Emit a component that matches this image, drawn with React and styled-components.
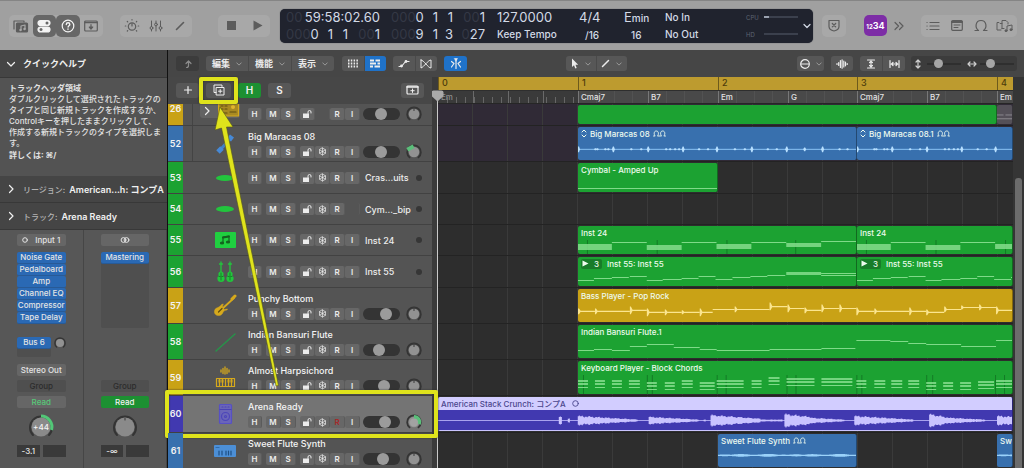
import React from 'react'
import styled, { createGlobalStyle, css } from 'styled-components'

const GREEN = '#1ca232'
const BLUE = '#3870ae'
const GOLD = '#c9a216'
const PURPLE = '#4139b0'
const LILAC = '#d2cdff'
const MARK = '#dfe31c'

const BARS = '140fr 140fr 139fr 140fr 16fr'

const trackList = [
  { no: 26, h: 22, color: GOLD, icon: 'machine', clipped: true, nested: true, noFreeze: true, vol: 48, pan: 0 },
  { no: 52, h: 36, color: BLUE, icon: 'maracas', name: 'Big Maracas 08', nested: true, vol: 48, pan: -1 },
  { no: 53, h: 32, color: GREEN, icon: 'cymbal', short: 'Cras...uits' },
  { no: 54, h: 31, color: GREEN, icon: 'cymbal', short: 'Cym..._bip', noInput: true },
  { no: 55, h: 31, color: GREEN, icon: 'notes', short: 'Inst 24' },
  { no: 56, h: 32, color: GREEN, icon: 'strings', short: 'Inst 55' },
  { no: 57, h: 36, color: GOLD, icon: 'guitar', name: 'Punchy Bottom', vol: 68, pan: 0 },
  { no: 58, h: 36, color: GREEN, icon: 'flute', name: 'Indian Bansuri Flute', vol: 38, pan: 0 },
  { no: 59, h: 36, color: GOLD, icon: 'keys', name: 'Almost Harpsichord', vol: 60, pan: 0 },
  { no: 60, h: 37, color: PURPLE, icon: 'amp', name: 'Arena Ready', selected: true, vol: 62, pan: 1 },
  { no: 61, h: 36, color: BLUE, icon: 'synth', name: 'Sweet Flute Synth', vol: 57, pan: 0 },
]

/* note lists: [x, y, width, height] */
const inst24 = [
  [0, 18, 34, 6], [34, 16, 35, 1], [69, 19, 35, 5], [104, 16, 35, 1],
  [139, 18, 35, 5], [174, 16, 35, 1], [209, 17, 35, 4], [244, 15, 35, 1],
]
const inst55 = [
  [0, 23, 16, 1], [16, 21, 18, 1], [34, 20, 17, 1], [52, 19, 17, 1], [69, 23, 16, 1], [85, 22, 19, 1],
  [104, 21, 17, 1], [121, 19, 17, 1], [138, 22, 17, 1], [155, 20, 18, 1], [173, 19, 17, 1], [190, 18, 18, 1],
  [209, 15, 35, 3], [244, 16, 35, 1], [244, 18, 35, 1],
]
const flute = [
  [0, 25, 16, 1], [16, 24, 18, 1], [34, 25, 18, 1], [52, 21, 17, 1], [69, 19, 27, 1], [96, 22, 26, 1],
  [122, 24, 17, 1], [139, 25, 53, 1], [192, 24, 52, 1], [244, 23, 34, 1], [279, 15, 34, 1], [313, 16, 18, 1],
  [331, 18, 18, 1], [349, 19, 35, 1], [384, 21, 35, 1], [419, 15, 16, 1],
]
const chordBlocks = [
  [0, 19, 10], [17, 19, 10], [34, 19, 10], [51, 19, 11], [69, 21, 10], [87, 21, 10], [104, 19, 11], [122, 21, 15],
  [139, 19, 27], [174, 19, 10], [191, 16, 11], [209, 17, 28], [244, 17, 31], [279, 19, 10], [297, 19, 11],
  [314, 19, 11], [331, 19, 11], [349, 21, 10], [366, 21, 10], [383, 21, 11], [401, 20, 16], [419, 19, 16],
]
const keyboard = chordBlocks.flatMap(([x, y, w]) => [[x, y, w, 2], [x, y + 3, w, 2], [x, y + 7, w, 1]])
/* [x, y, width, hit] */
const bass = [
  [0, 23, 17, 3], [17, 23, 35, 3], [52, 22, 17, 4], [69, 24, 18, 4], [87, 24, 17, 3], [104, 24, 18, 2],
  [122, 24, 13, 4], [135, 21, 22, 0], [157, 21, 35, 3], [192, 18, 18, 4], [210, 20, 17, 4], [227, 22, 17, 3],
  [244, 20, 18, 4], [262, 20, 17, 4], [279, 23, 18, 4], [297, 23, 35, 3], [332, 23, 17, 4], [349, 24, 18, 3],
  [367, 21, 17, 3], [384, 19, 18, 2], [402, 19, 17, 3], [419, 22, 16, 4],
]
const shakes = [[0, 3], [17, 1], [19, 1], [27, 1], [30, 1], [35, 3], [53, 1], [63, 1], [70, 3], [88, 1], [92, 1], [97, 1], [101, 1], [105, 3], [121, 1], [130, 1], [139, 3], [157, 1], [167, 1], [174, 3], [190, 1], [199, 1], [209, 3], [227, 2], [245, 3], [262, 1], [270, 1]]
/* [start, length, amplitude, tail] */
const bursts = [[121, 3, 4, 4], [130, 2, 2, 1], [140, 60, 5, 1], [211, 50, 4, 1], [266, 2, 1, 1], [273, 50, 6, 2], [323, 22, 1, 1], [347, 26, 7, 4], [373, 34, 3, 1], [417, 59, 5, 1], [492, 20, 7, 3], [512, 36, 3, 1], [560, 15, 5, 4]]

const Global = createGlobalStyle`
  * { box-sizing: border-box; }
  body {
    margin: 0;
    background: #2d2d2d;
    color: #ececec;
    font-family: Inter, "Noto Sans CJK JP", sans-serif;
    font-size: 10px;
  }
  button, input {
    font: inherit;
    color: inherit;
    margin: 0;
    padding: 0;
    border: 0;
    background: none;
  }
  h2, p { margin: 0; font-size: inherit; }
  svg { display: block; flex: none; }
`

const Page = styled.div`
  height: 100vh;
  overflow: hidden;
  display: flex;
  flex-direction: column;
`

/* ---------- control bar ---------- */

const ControlBar = styled.header`
  flex: none;
  height: 50px;
  padding: 0 7px 0 9px;
  border-top: 1px solid #858585;
  background: #a0a0a0;
  color: #5c5c5c;
  display: flex;
  align-items: center;
`
const BarGroup = styled.div`
  display: flex;
  height: 22px;
  width: ${p => p.$w}px;
  margin-right: ${p => p.$after || 0}px;
  border-radius: 5px;
  background: #a8a8a8;
`
const BarButton = styled.button`
  flex: 1;
  display: flex;
  align-items: center;
  justify-content: center;
  border-radius: 5px;
  ${p => p.$on && css`
    background: #676767;
    color: #f4f4f4;
  `}
`
const CountIn = styled.button`
  width: 23px;
  height: 21px;
  margin: 0 5px 0 18px;
  border-radius: 5px;
  background: #7d2da6;
  color: #fff;
  font-size: 9px;
  font-weight: 700;
  small { font-size: 6px; }
`
const More = styled.button`
  width: 14px;
  display: flex;
  justify-content: center;
`
const RightTools = styled.div`
  margin-left: auto;
`
const Lcd = styled.div`
  flex: 0 1 533px;
  min-width: 0;
  height: 34px;
  margin-right: 9px;
  padding-left: 6px;
  border-radius: 5px;
  background: #20232e;
  box-shadow: 0 0 1px #33363f;
  color: #d3dae6;
  display: grid;
  grid-template-columns: 105px 106px 82px 45px 41px 81px 52px 1fr;
  align-items: center;
  white-space: nowrap;
`
const LcdCell = styled.div`
  font-size: 10px;
  font-weight: 500;
  line-height: 17px;
`
const LcdBig = styled.div`
  font-size: 13px;
  height: 17px;
  ${p => p.$indent && css`padding-left: ${p.$indent}px;`}
  small { font-size: 10px; font-weight: 500; }
`
const Ghost = styled.span`
  color: #343845;
`
const Digits = styled.div`
  width: 94px;
  display: grid;
  grid-template-columns: 32px 15px 15px 32px;
  text-align: right;
  font-size: 13px;
  height: 17px;
`
const Clock = styled.div`
  width: 94px;
  display: flex;
  justify-content: space-between;
  font-size: 13px;
  height: 17px;
`
const Load = styled.div`
  display: flex;
  align-items: center;
  justify-content: space-between;
  height: 17px;
  color: #5d6372;
  font-size: 6px;
`
const LoadBar = styled.div`
  width: 34px;
  height: 2px;
  background: linear-gradient(90deg, ${p => p.$lit ? '#9aa2b0 0 5px,' : ''} #3b404d ${p => p.$lit ? '5px' : '0'});
`
const LcdMenu = styled.button`
  display: flex;
  justify-content: center;
  padding-left: 3px;
`

/* ---------- inspector ---------- */

const Body = styled.div`
  flex: 1;
  min-height: 0;
  display: flex;
`
const Inspector = styled.aside`
  flex: none;
  width: 168px;
  border-right: 1px solid #111;
  background: #535353;
  display: flex;
  flex-direction: column;
`
const Fold = styled.button`
  flex: none;
  height: ${p => p.$h}px;
  padding-left: 6px;
  border-bottom: 1px solid #383838;
  background: #454545;
  color: #f0f0f0;
  display: flex;
  align-items: center;
  text-align: left;
  font-size: 9px;
  font-weight: 600;
  white-space: nowrap;
  svg { margin-right: 7px; }
`
const FoldLabel = styled.span`
  margin-right: 4px;
  color: #b4b4b4;
  font-size: 8px;
  font-weight: 500;
`
const Help = styled.div`
  flex: none;
  height: 98px;
  padding: 4px 0 0 9px;
  color: #e2e2e2;
  font-size: 8px;
  font-weight: 500;
  line-height: 11px;
  white-space: nowrap;
  h2 { font-weight: 700; line-height: 12px; }
  strong { line-height: 12px; }
`
const Strips = styled.div`
  flex: 1;
  display: grid;
  grid-template-columns: 1fr 1fr;
  background: #575757;
`
const Strip = styled.div`
  padding: 4px 17px 0;
  border-right: 1px solid #464646;
  display: flex;
  flex-direction: column;
  align-items: stretch;
  color: #e4e4e4;
  font-size: 8px;
  font-weight: 500;
  white-space: nowrap;
`
const StripButton = styled.button`
  flex: none;
  height: 12px;
  margin-bottom: ${p => p.$after || 0}px;
  border-radius: 2px;
  background: ${p => p.$bg || '#666'};
  color: ${p => p.$fg || 'inherit'};
  display: flex;
  align-items: center;
  justify-content: center;
  gap: 7px;
`
const Inserts = styled.div`
  flex: none;
  height: 76px;
  margin-bottom: 9px;
  border-radius: 2px;
  background: ${p => p.$tall ? '#4f4f4f' : 'transparent'};
`
const Insert = styled.button`
  display: block;
  width: 100%;
  height: 12px;
  border-bottom: 1px solid #285a96;
  border-radius: 2px;
  background: #2a69b4;
  line-height: 11px;
`
const Sends = styled.div`
  flex: none;
  height: 27px;
  display: flex;
  justify-content: space-between;
`
const Send = styled.div`
  width: 34px;
  height: 20px;
  border-radius: 2px;
  background: #4f4f4f;
`
const PanHolder = styled.div`
  flex: none;
  height: 37px;
  display: flex;
  justify-content: center;
  align-items: center;
`
const Levels = styled.div`
  display: grid;
  grid-template-columns: 1fr 1fr;
  gap: 3px;
  span {
    height: 12px;
    background: #3a3a3a;
    line-height: 12px;
    text-align: center;
  }
`

/* ---------- tracks area ---------- */

const Main = styled.main`
  flex: 1;
  min-width: 0;
  display: flex;
  flex-direction: column;
`
const MenuBar = styled.div`
  flex: none;
  height: 27px;
  padding: 0 7px 0 8px;
  background: #464646;
  display: flex;
  align-items: center;
`
const Tools = styled.div`
  display: flex;
  height: 15px;
  width: ${p => p.$w}px;
  margin-right: ${p => p.$after || 0}px;
  border-radius: 3px;
  background: ${p => p.$dark ? '#3c3c3c' : '#575757'};
  overflow: hidden;
`
const Tool = styled.button`
  flex: 1;
  display: flex;
  align-items: center;
  justify-content: center;
  gap: 6px;
  font-size: 9px;
  font-weight: 700;
  background: ${p => p.$on ? '#1f72c9' : 'transparent'};
  color: ${p => p.$dim ? '#8c8c8c' : '#ececec'};
  & + & { border-left: 1px solid #4a4a4a; }
`
const Spacer = styled.div`
  flex: ${p => p.$n};
`
const ZoomBox = styled.label`
  flex: 1;
  display: flex;
  align-items: center;
  justify-content: space-between;
  padding: 0 3px;
  color: #cfcfcf;
`
const Zoom = styled.input`
  appearance: none;
  width: 34px;
  height: 9px;
  background: linear-gradient(#2f2f2f, #2f2f2f) center / 100% 2px no-repeat;
  &::-webkit-slider-thumb {
    appearance: none;
    width: 9px;
    height: 9px;
    border-radius: 50%;
    background: #a6a6a6;
  }
`
const Columns = styled.div`
  flex: 1;
  min-height: 0;
  display: flex;
`
const Headers = styled.section`
  position: relative;
  z-index: 2;
  flex: none;
  width: 264px;
  background: #545454;
`
const HeaderBar = styled.div`
  position: relative;
  z-index: 2;
  height: 27px;
  padding: 0 8px 1px 8px;
  background: #474747;
  display: flex;
  align-items: center;
  gap: 7px;
`
const HeaderButton = styled.button`
  width: ${p => p.$w || 23}px;
  height: 15px;
  border-radius: 3px;
  background: ${p => p.$on ? '#1d9032' : '#575757'};
  color: #efefef;
  display: flex;
  align-items: center;
  justify-content: center;
  font-size: 10px;
  font-weight: 600;
  &:last-child { margin-left: auto; }
`
const Pointed = styled.div`
  position: relative;
`
/* call-out frames lie over the interface */
const Frame = styled.div`
  position: absolute;
  inset: ${p => p.$inset};
  border: 4px solid ${MARK};
  border-radius: 2px;
  box-shadow: 0 0 2px #2a2a2a, inset 0 0 2px #2a2a2a;
  pointer-events: none;
`
const Arrow = styled.svg`
  position: absolute;
  left: -7px;
  top: -6px;
  pointer-events: none;
`
const TrackRow = styled.div`
  position: relative;
  height: ${p => p.$h}px;
  border-bottom: 1px solid #424242;
  background: ${p => p.$selected ? '#747474' : 'transparent'};
  display: flex;
  align-items: ${p => p.$clipped ? 'flex-end' : 'stretch'};
`
const TrackNo = styled.div`
  flex: none;
  width: 15px;
  height: ${p => p.$h - 1}px;
  line-height: ${p => p.$clipped ? 9 : p.$h - 1}px;
  background: ${p => p.$color};
  color: #f2f2f2;
  text-align: center;
  font-size: 9px;
  font-weight: 600;
`
const TrackIcon = styled.div`
  flex: none;
  width: ${p => p.$nested ? 56 : 65}px;
  margin-left: ${p => p.$nested ? 9 : 0}px;
  height: ${p => p.$clipped ? '100%' : 'auto'};
  padding-right: 8px;
  border-left: ${p => p.$nested ? '1px solid #444' : '0'};
  display: flex;
  align-items: ${p => p.$clipped ? 'flex-start' : 'center'};
  justify-content: flex-end;
`
const Folder = styled.div`
  height: 14px;
  padding-left: 2px;
  border-radius: 0 0 3px 3px;
  background: #636363;
  display: flex;
  align-items: center;
  gap: 6px;
`
const TrackInfo = styled.div`
  flex: 1;
  padding-right: 10px;
  padding-bottom: ${p => p.$clipped ? 5 : 0}px;
  display: flex;
  flex-direction: column;
  justify-content: center;
  gap: 2px;
`
const TrackName = styled.div`
  height: 14px;
  line-height: 13px;
  color: #f4f4f4;
  font-size: 9px;
  font-weight: 500;
  white-space: nowrap;
`
const TrackControls = styled.div`
  height: 12px;
  display: flex;
  align-items: center;
`
const Set = styled.div`
  display: flex;
  width: ${p => p.$n ? p.$n * 15 : 14}px;
  margin-right: ${p => p.$after}px;
`
const Key = styled.button`
  flex: 1;
  height: 12px;
  border-right: 1px solid #5b5b5b;
  border-radius: 2px;
  background: ${p => p.$blank ? 'transparent' : '#676767'};
  color: ${p => p.$armed ? '#a52a2a' : '#ececec'};
  display: flex;
  align-items: center;
  justify-content: center;
  font-size: 8px;
  font-weight: 600;
`
const Volume = styled.input`
  appearance: none;
  width: 37px;
  height: 12px;
  margin-right: 6px;
  border-radius: 6px;
  background: #343434;
  &::-webkit-slider-thumb {
    appearance: none;
    width: 12px;
    height: 12px;
    border-radius: 50%;
    background: #9b9b9b;
  }
`
const ShortName = styled.div`
  flex: 1;
  margin-left: 2px;
  font-size: 9px;
  font-weight: 500;
  white-space: nowrap;
`
const Dot = styled.span`
  width: 6px;
  height: 6px;
  border-radius: 50%;
  background: #363636;
`
const Gutter = styled.div`
  flex: none;
  width: 6px;
  background: #3b3b3b;
`

/* ---------- timeline ---------- */

const Timeline = styled.section`
  position: relative;
  flex: 1;
  min-width: 0;
`
const BarRuler = styled.div`
  height: 14px;
  border-bottom: 1px solid #2e2e2e;
  background: #bd9b2f;
  display: grid;
  grid-template-columns: ${BARS};
`
const BarMark = styled.div`
  padding-left: 3px;
  border-left: 1px solid #6d5a1c;
  color: #4c3b0b;
  font-size: 9px;
  font-weight: 500;
  line-height: 12px;
  overflow: hidden;
`
const ChordRuler = styled.div`
  height: 13px;
  border-bottom: 1px solid #262626;
  background: #494949;
  display: grid;
  grid-template-columns: 140fr 70fr 70fr 70fr 69fr 70fr 70fr 16fr;
`
const Chord = styled.div`
  min-width: 0;
  padding-left: 2px;
  border-left: 1px solid #777;
  overflow: hidden;
  font-size: 8px;
  font-weight: 500;
  line-height: 13px;
  white-space: nowrap;
  color: #e2e2e2;
  background: repeating-linear-gradient(90deg, transparent 0 17px, #525252 17px 18px);
  ${p => p.$before && css`
    border-color: transparent;
    color: #8d8d8d;
    background:
      repeating-linear-gradient(90deg, transparent 0 34px, #6a6a6a 34px 35px),
      repeating-linear-gradient(90deg, transparent 0 8px, #666 8px 9px) bottom / 100% 6px no-repeat,
      #3a3a3a;
  `}
`
const Lane = styled.div`
  height: ${p => p.$h}px;
  padding: 1px 0;
  border-bottom: 1px solid #232323;
  background:
    repeating-linear-gradient(90deg, transparent 0 34px, #3a3a3a 34px 35px),
    ${p => p.$tint ? '#302a36' : '#2d2d2d'};
  display: grid;
  grid-template-columns: ${BARS};
`
const Region = styled.div`
  position: relative;
  grid-column: ${p => p.$from} / ${p => p.$to};
  min-width: 0;
  overflow: hidden;
  border-radius: 2px;
  background: ${p => p.$color};
  border-right: 1px solid rgba(0, 0, 0, 0.35);
  color: #eefbee;
  font-size: 8px;
  font-weight: 500;
  svg.wave {
    position: absolute;
    inset: 0;
    width: 100%;
    height: 100%;
  }
`
const RegionName = styled.div`
  position: relative;
  height: 13px;
  padding-left: 3px;
  display: flex;
  align-items: center;
  gap: 3px;
  white-space: nowrap;
  ${p => p.$header && css`
    background: ${LILAC};
    color: #4a468c;
    gap: 6px;
  `}
`
const TakeBadge = styled.span`
  display: flex;
  align-items: center;
  gap: 5px;
  margin-right: 2px;
  padding: 0 3px 0 1px;
  border-radius: 2px;
  background: #187c29;
  line-height: 10px;
`
const Playhead = styled.div`
  position: absolute;
  left: -1px;
  top: 20px;
  bottom: 0;
  width: 1px;
  background: #c9c9c9;
  svg { margin: -7px 0 0 -6px; }
`
const ScrollTrack = styled.div`
  flex: none;
  width: 11px;
  padding: 101px 2px 0;
  background: #353535;
`
const ScrollThumb = styled.div`
  height: 100%;
  border-radius: 3px 3px 0 0;
  background: #6c6c6c;
`

/* ---------- drawings ---------- */

function Icon({ w = 16, h = w, box, children }) {
  return (
    <svg width={w} height={h} viewBox={box || `0 0 ${w} ${h}`} fill="none" stroke="currentColor" strokeWidth="1.2" strokeLinecap="round" strokeLinejoin="round" aria-hidden="true">
      {children}
    </svg>
  )
}

const Down = ({ s = 6 }) => <Icon w={s} box="0 0 8 8"><path d="M1 2.500 4 5.500 7 2.500" /></Icon>
const Caret = () => <Icon w={6} box="0 0 8 8"><path d="M1 2.500 4 5.500 7 2.500" stroke="#a0a0a0" /></Icon>
const Right = () => <Icon w={10}><path d="M3.500 1.500 7 5 3.500 8.500" /></Icon>

const Loops = () => (
  <Icon w={13} h={7}><path d="M.5 6H2.200C.8 4.800.6 1 3.300 1S5.800 4.800 4.400 6h4.200C7.200 4.800 7 1 9.700 1s2.500 3.800 1.100 5h1.700" strokeWidth=".9" /></Icon>
)

const Lock = () => (
  <Icon w={10} h={10}><rect x="1" y="4.500" width="6" height="4.500" fill="currentColor" stroke="none" /><path d="M6 4.500V3a1.500 1.500 0 0 1 3 0v1" strokeWidth="1" /></Icon>
)

const Freeze = () => (
  <Icon w={9}>
    <g strokeWidth=".7"><path d="M4.500 1v7M1.500 2.800l6 3.400M7.500 2.800l-6 3.400" /><path d="M4.500 1 7.500 2.800V6.200L4.500 8 1.500 6.200V2.800z" /></g>
  </Icon>
)

function PanKnob({ pan, size = 16 }) {
  return (
    <Icon w={size} box="0 0 18 18">
      <path d="M4 15A7.700 7.700 0 1 1 14 15" stroke="#343434" strokeWidth="2" />
      <circle cx="9" cy="9" r="6" fill="#929292" stroke="none" />
      {pan === 0 && <path d="M9 1.500V5" stroke="#3c3c3c" />}
      {pan > 0 && <path d="M9 9V1A8 8 0 0 1 16.500 12z" fill="#5bbf7a" stroke="none" />}
      {pan > 0 && <circle cx="9" cy="9.500" r="4.500" fill="#a2a2a2" stroke="none" />}
      {pan < 0 && <path d="M1.500 6.500 8.500 2.500" stroke="#5bbf7a" strokeWidth="4.500" strokeLinecap="butt" />}
    </Icon>
  )
}

const gold = '#d6a91c'
const lime = '#22c53d'

const trackIcons = {
  machine: (
    <Icon w={22} h={14}>
      <rect x=".5" y="-6" width="20" height="18" fill="#a98a22" stroke={gold} />
      <path d="M3 2h2M3 5h2M7 2h2M7 5h2M12 8h6M3 9h6" stroke="#5e4c10" /><circle cx="15" cy="3" r="2" fill="#e2b62c" stroke="none" />
    </Icon>
  ),
  maracas: (
    <Icon w={30} h={24}><path d="m11 17 9-10" stroke="#4180c8" strokeWidth="3" /><path d="m8 20 4-4M19 8l3-4" stroke="#4689d6" strokeWidth="5" strokeLinecap="butt" /></Icon>
  ),
  cymbal: <Icon w={30} h={8}><ellipse cx="15" cy="4" rx="9" ry="3" fill={lime} stroke="none" /></Icon>,
  notes: (
    <Icon w={30} h={18}>
      <rect x="5" y="1" width="21" height="16" rx="1" fill="#20cf40" stroke="none" />
      <g stroke="#14611f"><path d="M13 12V6l6-1v6" /><path d="M13 6.500 19 5.500" strokeWidth="2" /><ellipse cx="12" cy="12" rx="1.500" ry="1" fill="#14611f" /><ellipse cx="18" cy="11" rx="1.500" ry="1" fill="#14611f" /></g>
    </Icon>
  ),
  strings: (
    <Icon w={30} h={22}>
      {[11, 20].map(x => (
        <g key={x} stroke={lime}>
          <path d={`M${x} 1v12M${x - 1.5} 3h3`} strokeWidth="1.300" />
          <circle cx={x} cy="13" r="2.600" fill={lime} stroke="none" />
          <circle cx={x} cy="17.500" r="3.600" fill={lime} stroke="none" />
          <path d={`M${x} 12v7M${x - 2} 15.500h1M${x + 1} 15.500h1`} stroke="#14611f" strokeWidth=".7" />
        </g>
      ))}
    </Icon>
  ),
  guitar: (
    <Icon w={30} h={24}>
      <path d="m12 15 12-11" stroke={gold} strokeWidth="1.800" /><path d="m22 5 3-3" stroke={gold} strokeWidth="3" />
      <path d="M13 10c-2 0-2 2-4 3s-4 1-4.500 4 2 5 5 4.500 3-3 4.500-4.500 3 0 3.500-2l-3 .5-2-2z" fill={gold} stroke={gold} strokeWidth=".5" /><path d="m8.500 18 3.500-3.500" stroke="#5e4c10" />
    </Icon>
  ),
  flute: <Icon w={30} h={24}><path d="M6 21 25 4" stroke="#28924a" strokeWidth="1.500" /></Icon>,
  keys: (
    <Icon w={30} h={24}>
      <path d="M11 6V4M13 7.500v-5M15 8V1M17 7.500v-5M19 6V4" stroke={gold} strokeWidth="1.300" />
      <rect x="6.500" y="12.500" width="18" height="8" stroke={gold} />
      <path d="M9.500 13v7M12.500 13v7M15.500 13v7M18.500 13v7M21.500 13v7" stroke={gold} /><path d="M9.500 14v2M12.500 14v2M18.500 14v2M21.500 14v2" stroke={gold} strokeWidth="2" />
    </Icon>
  ),
  amp: (
    <Icon w={30} h={24}>
      <rect x="9.500" y="2.500" width="12" height="19" rx="1" fill="#6a65b8" stroke="#5750c4" /><path d="M10 7.500h11M12 5h1M15 5h1M18 5h1" stroke="#4a42b4" />
      <circle cx="15.500" cy="14.500" r="4" stroke="#4d46ba" /><circle cx="15.500" cy="14.500" r="1" stroke="#4d46ba" />
    </Icon>
  ),
  synth: (
    <Icon w={30} h={16}>
      <rect x="4" y="2" width="22" height="12" rx="1" fill="#4c8fd6" stroke="none" /><path d="M9 8v4M12 8v4M16 8v4M18.500 8v4M21 8v4" stroke="#1f5085" /><path d="M6 4.500h3" stroke="#2f6bab" />
    </Icon>
  ),
}

function Notes({ w, h, notes, ticks = [] }) {
  return (
    <svg className="wave" viewBox={`0 0 ${w} ${h}`} preserveAspectRatio="none" aria-hidden="true">
      {ticks.map(x => <path key={x} d={`M${x}.5 14v${h}`} stroke="#147a26" />)}
      {notes.map(([x, y, nw, nh], i) => (
        <rect key={i} x={x} y={y} width={nw} height={nh} fill="#85dd8d" opacity={nh > 1 ? 0.85 : 0.95} />
      ))}
    </svg>
  )
}

function BassWave() {
  return (
    <svg className="wave" viewBox="0 0 435 34" preserveAspectRatio="none" fill="#fbe58f" aria-hidden="true">
      {bass.map(([x, y, w, hit], i) => (
        <path key={i} d={`M${x} ${y - 0.5}h${w}v1.200h-${w}zM${x} ${y - hit}l1 0 2 ${hit}-2 ${hit}-1 0z`} />
      ))}
    </svg>
  )
}

function ShakerWave({ w }) {
  return (
    <svg className="wave" viewBox={`0 0 ${w} 34`} preserveAspectRatio="none" fill="#b8e0ff" aria-hidden="true">
      <rect y="22.500" width={w} height="1" fill="#8cc4f5" />
      {shakes.map(([x, a]) => <path key={x} d={`M${x - 1} 23l1-${a} 1 0 1 ${a}-1 ${a}-1 0z`} />)}
    </svg>
  )
}

function SynthWave({ w }) {
  const blips = []
  for (let x = 0; x < w; x += 2) {
    const a = 0.6 + 0.9 * Math.abs(Math.sin(x * 0.09) * Math.cos(x * 1.7))
    blips.push(`M${x} ${22 - a}h2v${a * 2}h-2z`)
  }
  return (
    <svg className="wave" viewBox={`0 0 ${w} 34`} preserveAspectRatio="none" aria-hidden="true">
      <path d={blips.join('')} fill="#9ad2fa" />
    </svg>
  )
}

function GuitarWave() {
  const lines = []
  bursts.forEach(([start, len, amp, tail]) => {
    for (let i = 0; i < len; i++) {
      const k = len > 4 ? i / len : 0
      const a = (amp + (tail - amp) * k) * (0.85 + 0.1 * Math.sin(i * 1.9) + 0.1 * Math.sin(i * 0.7))
      lines.push(`M${start + i} ${23.5 - a}h1.100v${a * 2}h-1.100z`)
    }
  })
  return (
    <svg className="wave" viewBox="0 0 575 34" preserveAspectRatio="none" fill="#c9c3ff" aria-hidden="true">
      <rect y="23" width="575" height="1" fill="#a8a2ee" />
      <path d={lines.join('')} />
      <rect y="33" width="575" height="1" />
    </svg>
  )
}

/* ---------- parts ---------- */

function TopBar() {
  return (
    <ControlBar>
      <BarGroup $w={94} $after={17}>
        <BarButton aria-label="Library">
          <Icon w={16} h={14}><path d="M1 10V2h10v1" /><rect x="3.500" y="4" width="11" height="9" rx="1" fill="currentColor" /><path d="M8 11V7l4-1v4" stroke="#a8a8a8" /><circle cx="7.500" cy="11" r=".6" stroke="#a8a8a8" /><circle cx="11.500" cy="10" r=".6" stroke="#a8a8a8" /></Icon>
        </BarButton>
        <BarButton $on aria-label="Inspector">
          <Icon w={14} h={14}><rect x="1" y="1.500" width="12" height="5" rx="2.500" fill="currentColor" /><rect x="1" y="8" width="12" height="5" rx="2.500" fill="currentColor" /><circle cx="10" cy="4" r="1.500" fill="#676767" stroke="none" /><circle cx="4" cy="10.500" r="1.500" fill="#676767" stroke="none" /></Icon>
        </BarButton>
        <BarButton $on aria-label="Quick Help">
          <Icon w={14}><circle cx="7" cy="7" r="5.800" /><path d="M5.300 5.500c0-2.300 3.500-2.300 3.500 0 0 1.200-1.700 1.300-1.700 2.500M7 10v.2" strokeWidth="1.400" /></Icon>
        </BarButton>
        <BarButton aria-label="Toolbar">
          <Icon w={14} h={12}><rect x=".7" y="1" width="12.600" height="10" rx="1" /><path d="M1 2.500h12" strokeWidth="1.500" /><path d="M7 4.500V8M5.300 7 7 9l1.700-2z" fill="currentColor" /></Icon>
        </BarButton>
      </BarGroup>
      <BarGroup $w={72} $after={26}>
        <BarButton aria-label="Smart Controls">
          <Icon w={16}><circle cx="8" cy="8.500" r="3.700" /><path d="M8 8V5.500M8 1.500v.5M3.300 3.500l.4.4M12.700 3.500l-.4.400M1.300 8h.5M14.200 8h.5M3.300 13l.4-.4M12.700 13l-.4-.4" /></Icon>
        </BarButton>
        <BarButton aria-label="Mixer">
          <Icon w={14}><g strokeWidth="1"><path d="M2.500 2v5.500M2.500 10.500V12M7 2v2M7 7v5M11.500 2v5.500M11.500 10.500V12" /><circle cx="2.500" cy="9" r="1.400" /><circle cx="7" cy="5.500" r="1.400" /><circle cx="11.500" cy="9" r="1.400" /></g></Icon>
        </BarButton>
        <BarButton aria-label="Editors">
          <Icon w={12}><path d="m2.500 9.500 7-7" strokeWidth="1.600" /></Icon>
        </BarButton>
      </BarGroup>
      <BarGroup $w={52} $after={10}>
        <BarButton aria-label="Stop"><Icon w={11}><rect x="1" y="1" width="9" height="9" fill="currentColor" stroke="none" /></Icon></BarButton>
        <BarButton aria-label="Play"><Icon w={11}><path d="M1.500.5v10l9-5z" fill="currentColor" stroke="none" /></Icon></BarButton>
      </BarGroup>
      <Lcd>
        <div>
          <Clock><Ghost>00</Ghost><span>59:58:02.60</span></Clock>
          <Digits><span><Ghost>000</Ghost>0</span><span>1</span><span>1</span><span><Ghost>00</Ghost>1</span></Digits>
        </div>
        <div>
          <Digits><span><Ghost>000</Ghost>0</span><span>1</span><span>1</span><span><Ghost>00</Ghost>1</span></Digits>
          <Digits><span><Ghost>000</Ghost>9</span><span>1</span><span>3</span><span><Ghost>0</Ghost>27</span></Digits>
        </div>
        <div><LcdBig>127.0000</LcdBig><LcdCell>Keep Tempo</LcdCell></div>
        <div><LcdBig>4/4</LcdBig><LcdBig $indent={6}><small>/16</small></LcdBig></div>
        <div><LcdBig>E<small>min</small></LcdBig><LcdBig $indent={7}><small>16</small></LcdBig></div>
        <div><LcdCell>No In</LcdCell><LcdCell>No Out</LcdCell></div>
        <div><Load>CPU<LoadBar $lit /></Load><Load>HD<LoadBar /></Load></div>
        <LcdMenu aria-label="Display mode"><Down s={8} /></LcdMenu>
      </Lcd>
      <BarGroup $w={24}>
        <BarButton aria-label="Replace">
          <Icon w={12} h={13}><path d="M1 1.500h10v6c0 2.500-2.500 4-5 4.500-2.500-.5-5-2-5-4.500z" /><path d="m4.300 4.500 3.400 3.400M7.700 4.500 4.300 7.900" /></Icon>
        </BarButton>
      </BarGroup>
      <CountIn><small>12</small>34</CountIn>
      <More aria-label="More"><Icon w={10}><path d="m1 1.500 3.500 3.500L1 8.500M5.500 1.500 9 5 5.500 8.500" /></Icon></More>
      <RightTools>
        <BarGroup $w={96}>
          <BarButton aria-label="List Editors"><Icon w={14} h={10}><path d="M4 1.500h9M4 5h9M4 8.500h9M1 1.500h.1M1 5h.1M1 8.500h.1" /></Icon></BarButton>
          <BarButton aria-label="Note Pads"><Icon w={12} h={11}><rect x=".7" y=".7" width="10.600" height="9.600" rx="1" /><path d="M1 2h10" strokeWidth="2" /><path d="M3 5h6M3 7.500h4" strokeWidth="1" /></Icon></BarButton>
          <BarButton aria-label="Loop Browser"><Icon w={14} h={13}><path d="M1 11.500h3.500C.5 8.500 1.500 1.500 7 1.500s6.500 7 2.500 10H13" /></Icon></BarButton>
          <BarButton aria-label="Browsers"><Icon w={18} h={14}><g strokeWidth="1"><path d="M5 11H1V3.500h2l1 1h2" /><path d="M6 9.500V1.500h4l2 2V5M8 9.500H6" /><path d="M11 11.500V7l5-1v4.500" /><circle cx="10" cy="11.700" r="1" fill="currentColor" /><circle cx="15" cy="10.700" r="1" fill="currentColor" /></g></Icon></BarButton>
        </BarGroup>
      </RightTools>
    </ControlBar>
  )
}

const plugins = ['Noise Gate', 'Pedalboard', 'Amp', 'Channel EQ', 'Compressor', 'Tape Delay']

function InspectorPane() {
  return (
    <Inspector>
      <Fold $h={28}><Icon w={10}><path d="M1.500 3.500 5 7l3.500-3.500" /></Icon>クイックヘルプ</Fold>
      <Help>
        <h2>トラックヘッダ領域</h2>
        <p>
          ダブルクリックして選択されたトラックの<br />
          タイプと同じ新規トラックを作成するか、<br />
          Controlキーを押したままクリックして、<br />
          作成する新規トラックのタイプを選択しま<br />
          す。
        </p>
        <strong>詳しくは: ⌘/</strong>
      </Help>
      <Fold $h={27}><Right /><FoldLabel>リージョン:</FoldLabel>American...h: コンプA</Fold>
      <Fold $h={27}><Right /><FoldLabel>トラック:</FoldLabel>Arena Ready</Fold>
      <Strips>
        <Strip>
          <StripButton $after={6}><Icon w={6}><circle cx="3" cy="3" r="2.300" strokeWidth="1" /></Icon>Input 1</StripButton>
          <Inserts>{plugins.map(name => <Insert key={name}>{name}</Insert>)}</Inserts>
          <Sends>
            <Send><Insert>Bus 6</Insert></Send>
            <PanKnob size={12} />
          </Sends>
          <StripButton $after={4}>Stereo Out</StripButton>
          <StripButton $bg="#4f4f4f" $fg="#2c2c2c" $after={4}>Group</StripButton>
          <StripButton $fg="#58c878">Read</StripButton>
          <PanHolder>
            <Icon w={28} box="0 0 28 28">
              <path d="M6 22A11 11 0 1 1 22 22" stroke="#343434" strokeWidth="2" /><circle cx="14" cy="14" r="9.500" fill="#8a8a8a" stroke="none" />
              <path d="M14 3A11 11 0 0 1 24.500 17" stroke="#52c777" strokeWidth="3" strokeLinecap="butt" />
              <text x="14" y="17" textAnchor="middle" fontSize="8" fill="#f4f4f4" stroke="none">+44</text>
            </Icon>
          </PanHolder>
          <Levels><span>-3.1</span><span /></Levels>
        </Strip>
        <Strip>
          <StripButton $after={6} aria-label="Stereo format"><Icon w={10} h={6}><circle cx="3.500" cy="3" r="2.400" strokeWidth="1" /><circle cx="6.500" cy="3" r="2.400" strokeWidth="1" /></Icon></StripButton>
          <Inserts $tall><Insert>Mastering</Insert></Inserts>
          <Sends />
          <StripButton $bg="transparent" $after={4} aria-hidden="true" tabIndex={-1} />
          <StripButton $bg="#4f4f4f" $fg="#2c2c2c" $after={4}>Group</StripButton>
          <StripButton $bg="#1d9032" $fg="#f2f2f2">Read</StripButton>
          <PanHolder>
            <Icon w={28} box="0 0 28 28">
              <path d="M6 22A11 11 0 1 1 22 22" stroke="#343434" strokeWidth="2" /><circle cx="14" cy="14" r="9.500" fill="#8a8a8a" stroke="none" />
              <path d="M14 5v2" stroke="#444" />
            </Icon>
          </PanHolder>
          <Levels><span>-∞</span><span /></Levels>
        </Strip>
      </Strips>
    </Inspector>
  )
}

function AreaMenu() {
  return (
    <MenuBar>
      <Tools $w={23} $after={7} $dark><Tool $dim aria-label="Up"><Icon w={10}><path d="M3 4.500 5.500 2 8 4.500M5.500 2v4.500q0 2-2 2" /></Icon></Tool></Tools>
      <Tools $w={128} $after={8}>
        <Tool>編集<Caret /></Tool>
        <Tool>機能<Caret /></Tool>
        <Tool>表示<Caret /></Tool>
      </Tools>
      <Tools $w={44} $after={7}>
        <Tool aria-label="Grid"><Icon w={12} h={9}><path d="M1 1.500h10M1 4.500h10M1 7.500h10" strokeWidth="1.800" strokeDasharray="1.500 1.300" strokeLinecap="butt" /></Icon></Tool>
        <Tool $on aria-label="Tracks"><Icon w={12} h={9}><path d="M1 1.500h4M6.500 1.500H11M1 4.500h6M8.500 4.500H11M1 7.500h3M5.500 7.500H11" strokeWidth="2" strokeLinecap="butt" /></Icon></Tool>
      </Tools>
      <Tools $w={44} $after={7}>
        <Tool aria-label="Automation"><Icon w={12} h={9}><path d="M1 7.500h2.500l4-5H11" /><circle cx="3.500" cy="7" r=".8" fill="currentColor" /><circle cx="8" cy="2.500" r=".8" fill="currentColor" /></Icon></Tool>
        <Tool aria-label="Flex"><Icon w={12} h={10}><path d="M1 1v8C4 8 8 1 11 1v8C8 9 4 1 1 1z" strokeWidth="1" /></Icon></Tool>
      </Tools>
      <Tools $w={23}><Tool $on aria-label="Catch"><Icon w={12} h={11}><path d="M6 1v9.500M1.500 3.500 4 5.500 1.500 9M10.500 3.500 8 5.500 10.500 9" /><path d="M4.500.5h3L6 3z" fill="currentColor" strokeWidth=".5" /></Icon></Tool></Tools>
      <Spacer $n={99} />
      <Tools $w={61}>
        <Tool aria-label="Pointer tool"><Icon w={8} h={11}><path d="M1 .5v8.500l2-1.800L4.300 10.500l1.400-.6L4.500 6.800H7.200z" fill="currentColor" stroke="none" /></Icon><Caret /></Tool>
        <Tool aria-label="Pencil tool"><Icon w={9}><path d="M1.500 7.500 7.500 1.500" strokeWidth="1.500" /></Icon><Caret /></Tool>
      </Tools>
      <Spacer $n={171} />
      <Tools $w={27} $after={7}><Tool aria-label="Snap"><Icon w={10}><circle cx="5" cy="5" r="4.300" /><path d="M1 5h8" /></Icon><Caret /></Tool></Tools>
      <Tools $w={22} $after={7}><Tool aria-label="Waveform zoom"><Icon w={12} h={10}><path d="M1 4.500v1M2.700 3.500v3M4.400 1.500v7M6.100.8v8.400M7.800 2v6M9.500 3.200v3.600M11.200 4.500v1" /></Icon></Tool></Tools>
      <Tools $w={45} $after={6}>
        <Tool aria-label="Vertical auto zoom"><Icon w={10}><path d="M1.500 1h7M1.500 9h7M5 2v6M3.500 3.700 5 2.200l1.500 1.500M3.500 6.300 5 7.800l1.500-1.500" /></Icon></Tool>
        <Tool aria-label="Horizontal auto zoom"><Icon w={11} h={10}><path d="M1 1.500v7M10 1.500v7M2.200 5h6.600M4 3.500 2.500 5 4 6.500M7 3.500 8.500 5 7 6.500" /></Icon></Tool>
      </Tools>
      <Tools $w={106} $dark>
        <ZoomBox><Icon w={8} h={10}><path d="M4 1v8M2 3l2-2 2 2M2 7l2 2 2-2" /></Icon><Zoom type="range" defaultValue="28" aria-label="Vertical zoom" /></ZoomBox>
        <ZoomBox><Icon w={10} h={8}><path d="M1 4h8M3 2 1 4l2 2M7 2l2 2-2 2" /></Icon><Zoom type="range" defaultValue="22" aria-label="Horizontal zoom" /></ZoomBox>
      </Tools>
    </MenuBar>
  )
}

function TrackHeader({ t }) {
  return (
    <TrackRow $h={t.h} $selected={t.selected} $clipped={t.clipped}>
      <TrackNo $h={t.h} $color={t.color} $clipped={t.clipped}>{t.no}</TrackNo>
      <TrackIcon $nested={t.nested} $clipped={t.clipped}>
        {t.clipped ? <Folder><Right />{trackIcons[t.icon]}</Folder> : trackIcons[t.icon]}
      </TrackIcon>
      <TrackInfo $clipped={t.clipped}>
        {t.name && <TrackName>{t.name}</TrackName>}
        <TrackControls>
          <Set $after={4}><Key>H</Key></Set>
          <Set $n={2} $after={4}><Key>M</Key><Key>S</Key></Set>
          <Set $n={4} $after={3}>
            <Key aria-label="Protect"><Lock /></Key>
            {t.noFreeze ? <Key $blank disabled aria-hidden="true" /> : <Key aria-label="Freeze"><Freeze /></Key>}
            <Key $armed={t.selected}>R</Key>
            {t.noInput ? <Key $blank disabled aria-hidden="true" /> : <Key>I</Key>}
          </Set>
          {t.short
            ? <><ShortName>{t.short}</ShortName><Dot /></>
            : <><Volume type="range" defaultValue={t.vol} aria-label={`Volume ${t.no}`} /><PanKnob pan={t.pan} /></>}
        </TrackControls>
      </TrackInfo>
      {t.selected && <Frame $inset="-6px -6px -6px -3px" />}
    </TrackRow>
  )
}

const LoopSign = () => <Icon w={6} h={9}><path d="M1 3 3 1l2 2M1 6l2 2 2-2" strokeWidth="1" /></Icon>
const PlaySign = () => <Icon w={7}><path d="M.5.5v6l6-3z" fill="currentColor" stroke="none" /></Icon>

function Arrange() {
  return (
    <Timeline>
      <BarRuler>{[0, 1, 2, 3, 4].map(n => <BarMark key={n}>{n}</BarMark>)}</BarRuler>
      <ChordRuler>
        <Chord $before>Em</Chord>
        {['Cmaj7', 'B7', 'Em', 'G', 'Cmaj7', 'B7', 'Em'].map((c, i) => <Chord key={i}>{c}</Chord>)}
      </ChordRuler>
      <Lane $h={22} $tint>
        <Region $from={2} $to={5} $color={GREEN} />
        <Region $from={5} $to={6} $color="#545058">
          <svg className="wave" viewBox="0 0 16 20" preserveAspectRatio="none" stroke="#8d8a90"><path d="M0 10.500h7M9 10.500h7M0 14.500h16" /></svg>
        </Region>
      </Lane>
      <Lane $h={36} $tint>
        <Region $from={2} $to={4} $color={BLUE}><ShakerWave w={279} /><RegionName><LoopSign />Big Maracas 08 <Loops /></RegionName></Region>
        <Region $from={4} $to={6} $color={BLUE}><ShakerWave w={156} /><RegionName><LoopSign />Big Maracas 08.1 <Loops /></RegionName></Region>
      </Lane>
      <Lane $h={32}>
        <Region $from={2} $to={3} $color={GREEN}><Notes w={140} h={29} notes={[[0, 25, 140, 1]]} /><RegionName>Cymbal - Amped Up</RegionName></Region>
      </Lane>
      <Lane $h={31} />
      <Lane $h={31}>
        <Region $from={2} $to={4} $color={GREEN}><Notes w={279} h={28} notes={inst24} ticks={[9, 79, 149, 218]} /><RegionName>Inst 24</RegionName></Region>
        <Region $from={4} $to={6} $color={GREEN}><Notes w={156} h={28} notes={inst24} ticks={[9, 79, 149]} /><RegionName>Inst 24</RegionName></Region>
      </Lane>
      <Lane $h={32}>
        <Region $from={2} $to={4} $color={GREEN}><Notes w={279} h={29} notes={inst55} /><RegionName><TakeBadge><PlaySign />3</TakeBadge>Inst 55: Inst 55</RegionName></Region>
        <Region $from={4} $to={6} $color={GREEN}><Notes w={156} h={29} notes={inst55} /><RegionName><TakeBadge><PlaySign />3</TakeBadge>Inst 55: Inst 55</RegionName></Region>
      </Lane>
      <Lane $h={36}>
        <Region $from={2} $to={6} $color={GOLD}><BassWave /><RegionName>Bass Player - Pop Rock</RegionName></Region>
      </Lane>
      <Lane $h={36}>
        <Region $from={2} $to={6} $color={GREEN}><Notes w={435} h={33} notes={flute} /><RegionName>Indian Bansuri Flute.1</RegionName></Region>
      </Lane>
      <Lane $h={36}>
        <Region $from={2} $to={6} $color={GREEN}><Notes w={435} h={33} notes={keyboard} ticks={[5, 69, 74, 139, 148, 209, 218, 279, 284, 349, 355, 418, 427]} /><RegionName>Keyboard Player - Block Chords</RegionName></Region>
      </Lane>
      <Lane $h={37}>
        <Region $from={1} $to={6} $color={PURPLE}><GuitarWave /><RegionName $header>American Stack Crunch: コンプA<Icon w={7}><circle cx="3.500" cy="3.500" r="2.800" strokeWidth=".9" /></Icon></RegionName></Region>
      </Lane>
      <Lane $h={36}>
        <Region $from={3} $to={4} $color={BLUE}><SynthWave w={139} /><RegionName>Sweet Flute Synth <Loops /></RegionName></Region>
        <Region $from={5} $to={6} $color={BLUE}><SynthWave w={16} /><RegionName>Sweet Flute Synth</RegionName></Region>
      </Lane>
      <Playhead>
        <Icon w={13} h={12}><path d="M.5 2.500Q.5.500 2.500.5h8q2 0 2 2V6l-6 5.500L.5 6z" fill="#a9a9a9" stroke="none" /></Icon>
      </Playhead>
    </Timeline>
  )
}

function App() {
  return (
    <Page>
      <Global />
      <TopBar />
      <Body>
        <InspectorPane />
        <Main>
          <AreaMenu />
          <Columns>
            <Headers>
              <HeaderBar>
                <HeaderButton aria-label="Add track"><Icon w={10}><path d="M5 1.500v7M1.500 5h7" /></Icon></HeaderButton>
                <Pointed>
                  <HeaderButton $w={25} aria-label="Duplicate track">
                    <Icon w={12}><path d="M3 8.500H1V1h8v1.500" strokeWidth="1" /><rect x="3.500" y="3.500" width="7.500" height="7.500" strokeWidth="1" /><path d="M7.200 5.500v3.500M5.500 7.200H9" strokeWidth="1" /></Icon>
                  </HeaderButton>
                  <Frame $inset="-6px -7px" />
                  <Arrow width="90" height="312" viewBox="0 0 90 312" aria-hidden="true">
                    <path d="M21 30 L16 53 L22.500 51 L77 309 L79.500 308.500 L27.500 50 L34 50 Z" fill={MARK} stroke="#54561c" strokeWidth=".6" />
                  </Arrow>
                </Pointed>
                <HeaderButton $on>H</HeaderButton>
                <HeaderButton>S</HeaderButton>
                <HeaderButton aria-label="Global tracks"><Icon w={13} h={10}><rect x="1" y="1" width="11" height="8" rx="1" /><path d="M1 2h11" strokeWidth="1.500" /><path d="M6.500 4v3.500M4.800 5.700h3.400" strokeWidth="1" /></Icon></HeaderButton>
              </HeaderBar>
              {trackList.map(t => <TrackHeader key={t.no} t={t} />)}
            </Headers>
            <Gutter />
            <Arrange />
            <ScrollTrack><ScrollThumb /></ScrollTrack>
          </Columns>
        </Main>
      </Body>
    </Page>
  )
}

export default App
